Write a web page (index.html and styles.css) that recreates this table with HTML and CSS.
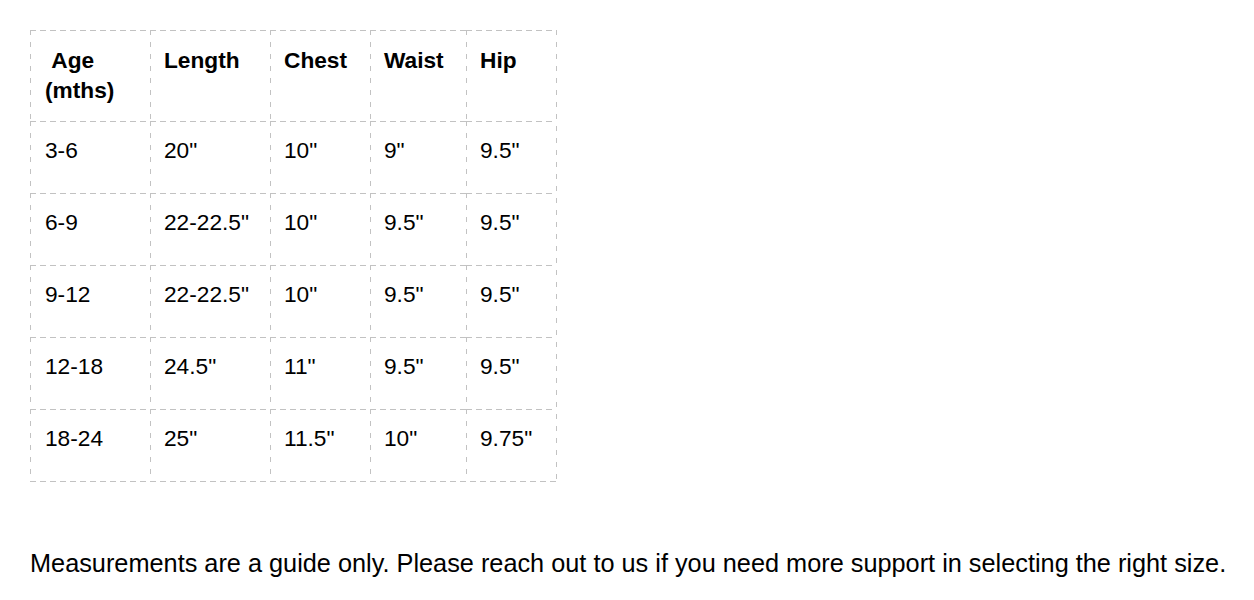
FILE: index.html
```html
<!DOCTYPE html>
<html>
<head>
<meta charset="utf-8">
<link rel="stylesheet" href="styles.css">
</head>
<body>
<div class="page">
  <div class="table-frame">
    <table class="size-table">
      <colgroup>
        <col class="c1"><col class="c2"><col class="c3"><col class="c4"><col class="c5">
      </colgroup>
      <tr class="head-row">
        <th class="first">&nbsp;Age<br>(mths)</th>
        <th>Length</th>
        <th>Chest</th>
        <th>Waist</th>
        <th>Hip</th>
      </tr>
      <tr class="body-row"><td class="first">3-6</td><td>20"</td><td>10"</td><td>9"</td><td>9.5"</td></tr>
      <tr class="body-row"><td class="first">6-9</td><td>22-22.5"</td><td>10"</td><td>9.5"</td><td>9.5"</td></tr>
      <tr class="body-row"><td class="first">9-12</td><td>22-22.5"</td><td>10"</td><td>9.5"</td><td>9.5"</td></tr>
      <tr class="body-row"><td class="first">12-18</td><td>24.5"</td><td>11"</td><td>9.5"</td><td>9.5"</td></tr>
      <tr class="body-row"><td class="first">18-24</td><td>25"</td><td>11.5"</td><td>10"</td><td>9.75"</td></tr>
    </table>
  </div>
  <p class="note">Measurements are a guide only. Please reach out to us if you need more support in selecting the right size.</p>
</div>
</body>
</html>
```
FILE: styles.css
```css
html, body {
  margin: 0;
  padding: 0;
  background: #ffffff;
}
body {
  font-family: "Liberation Sans", Arial, sans-serif;
  color: #000;
}
.page {
  padding: 30px 0 0 30px;
}
.table-frame {
  display: inline-block;
  padding: 0 1px 1px 0;
  background-image:
    repeating-linear-gradient(to bottom, #c2c2c2 0 5px, transparent 5px 12px),
    repeating-linear-gradient(to right, #c2c2c2 0 6px, transparent 6px 10px);
  background-repeat: no-repeat;
  background-position: right top, left bottom;
  background-size: 1px 100%, 100% 1px;
}
.size-table {
  border-collapse: separate;
  border-spacing: 0;
  table-layout: fixed;
  width: 526px;
  font-size: 22.7px;
  line-height: 30px;
}
.size-table th,
.size-table td {
  border: 0;
  text-align: left;
  vertical-align: top;
  padding: 14px 13px 0 14px;
  white-space: nowrap;
  background-image:
    repeating-linear-gradient(to right, #c2c2c2 0 6px, transparent 6px 10px),
    repeating-linear-gradient(to bottom, #c2c2c2 0 5px, transparent 5px 12px);
  background-repeat: no-repeat;
  background-position: left top, left top;
  background-size: 100% 1px, 1px 100%;
}
.size-table th {
  font-weight: bold;
  padding-top: 15px;
}
.size-table .first {
  padding-left: 15px;
}
.head-row { height: 91px; }
.body-row { height: 72px; }
.c1 { width: 120px; }
.c2 { width: 120px; }
.c3 { width: 100px; }
.c4 { width: 96px; }
.c5 { width: 90px; }
.note {
  margin: 62px 0 0 0;
  font-size: 25.3px;
  line-height: 30px;
  white-space: nowrap;
}
```
